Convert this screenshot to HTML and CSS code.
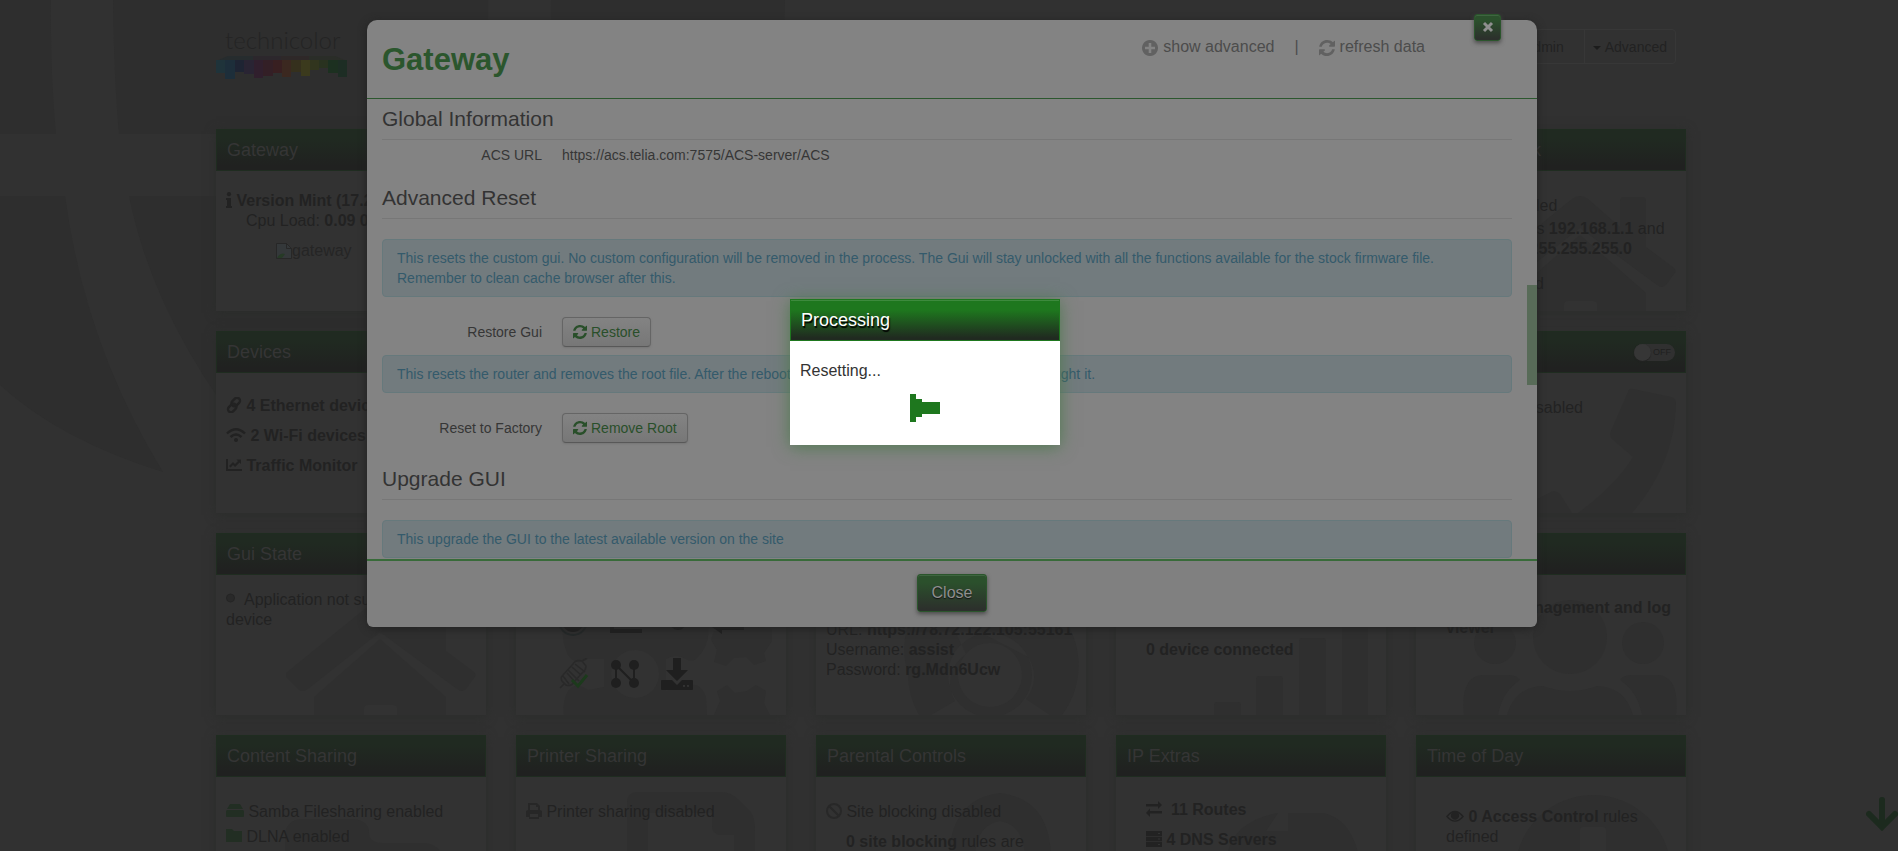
FILE: index.html
```html
<!DOCTYPE html>
<html lang="en">
<head>
<meta charset="utf-8">
<title>Gateway</title>
<link rel="stylesheet" href="styles.css">
</head>
<body>
<svg class="defs" width="0" height="0" aria-hidden="true">
  <symbol id="refresh" viewBox="0 0 1536 1536"><path d="M1511 928c0 2 0 5-1 7-89 371-385 601-762 601-202 0-398-80-545-220L74 1445c-12 12-28 19-45 19-16 0-29-29-29-64V952c0-35 29-64 64-64h448c35 0 64 29 64 64 0 17-7 33-19 45l-137 137c94 88 219 138 348 138 178 0 343-92 436-244 24-39 36-77 53-117 5-14 15-23 30-23h192c18 0 32 15 32 40zm25-800v448c0 35-29 64-64 64h-448c-35 0-64-29-64-64 0-17 7-33 19-45l138-138c-95-88-220-137-349-137-178 0-343 92-436 244-24 39-36 77-53 117-5 14-15 23-30 23H50c-18 0-32-14-32-32v-7C108 230 407 0 784 0c202 0 400 81 547 220l130-129c12-12 28-19 45-19 16 0 30 29 30 56z"/></symbol>
  <symbol id="house" viewBox="0 0 270 140"><path d="M70 98 L156 28 Q164 22 172 28 L204 56 V30 Q204 26 208 26 H226 Q230 26 230 30 V76 L258 97 Q261 100 258 103 L250 114 Q246 118 241 114 L164 57 L92 114 Q86 118 82 114 L70 102Z"/><path d="M98 122 L164 64 L230 122 V140 H181 V133 Q181 130 177 130 H152 Q148 130 148 134 V140 H98Z"/></symbol>
</svg>

<svg class="globe" viewBox="0 0 800 520" aria-hidden="true">
  <path class="dark" d="M0 0H51Q50 70 56 134H0ZM113 0H488Q489 70 483 134H119Q114 80 113 0ZM551 0H785Q784 70 775 134H546Q551 80 551 0ZM0 196H65Q85 345 163 472Q60 440 0 385ZM129 196H475Q445 370 301 500Q160 350 129 196ZM539 196H760Q700 370 460 470Q520 350 539 196Z"/>
</svg>

<div class="page">
  <header class="top">
    <svg class="logo" width="132" height="52" viewBox="0 0 132 52" role="img" aria-label="technicolor">
      <text class="logo-text" x="9" y="20">technicolor</text>
      <path fill="#262c2e" d="M0 32l12-5h25v5z"/><path fill="#2c272c" d="M37 32v-5h28v5z"/><path fill="#2e2828" d="M65 32v-5h28v5z"/><path fill="#2a2d28" d="M93 32v-5h26l12 5z"/>
      <path fill="#1f333a" d="M0 31h9v13H0z"/><path fill="#1d2e3a" d="M9 31h10v19H9z"/><path fill="#1e2433" d="M19 31h9v12h-9z"/><path fill="#292433" d="M28 31h10v14H28z"/><path fill="#301f2d" d="M38 31h9v18h-9z"/><path fill="#331f26" d="M47 31h10v16H47z"/><path fill="#381f21" d="M57 31h9v13h-9z"/><path fill="#3b2820" d="M66 31h9v17h-9z"/><path fill="#35301d" d="M75 31h10v12H75z"/><path fill="#3b3a1d" d="M85 31h9v16h-9z"/><path fill="#31351e" d="M94 31h9v10h-9z"/><path fill="#29321f" d="M103 31h9v8h-9z"/><path fill="#1c3020" d="M112 31h10v13h-10z"/><path fill="#1d2d24" d="M122 31h9v17h-9z"/>
    </svg>
    <nav class="nav">
      <button type="button">admin</button>
      <button type="button"><span class="caret"></span>Advanced</button>
    </nav>
  </header>

  <main class="grid">
    <section class="card">
      <h2>Gateway</h2>
      <div class="body">
        <p><svg class="i6" viewBox="0 0 6 16"><circle cx="3" cy="2.2" r="2.1"/><path d="M0 6h5v8h1v2H0v-2h1V8H0z"/></svg> <b>Version Mint (17.2)</b></p>
        <p class="indent">Cpu Load: <b>0.09 0.12</b></p>
        <p class="thumb"><svg class="broken" viewBox="0 0 16 16"><path d="M.5.5h10l5 5v10H.5z" fill="#34383a" stroke="#272727"/><path d="M10.500.5v5h5" fill="none" stroke="#272727"/><path d="M1 15q3-6 8-4l-3 4z" fill="#263a26"/></svg><span>gateway</span></p>
      </div>
    </section>
    <section class="card"><h2>Broadband</h2><div class="body"></div></section>
    <section class="card"><h2>Internet Access</h2><div class="body"></div></section>
    <section class="card"><h2>Wireless</h2><div class="body"></div></section>
    <section class="card">
      <h2>Local Network</h2>
      <div class="body">
        <svg class="mark"><use href="#house"/></svg>
        <p class="low">&emsp;&nbsp;&nbsp;DHCP enabled</p>
        <p class="indent tight">Gateway IP is <b>192.168.1.1</b> and</p>
        <p class="indent">Netmask is <b>255.255.255.0</b></p>
        <p class="indent gap">&nbsp;IPv6 enabled</p>
      </div>
    </section>

    <section class="card">
      <h2>Devices</h2>
      <div class="body list">
        <p><svg class="i16" viewBox="0 0 16 16"><g fill="none" stroke="#222" stroke-width="2.400"><rect x="6.800" y="0.300" width="6" height="9.500" rx="3" transform="rotate(45 9.800 5)"/><rect x="3.200" y="6.200" width="6" height="9.500" rx="3" transform="rotate(45 6.200 11)"/></g></svg> <b>4 Ethernet devices</b></p>
        <p><svg class="i20" viewBox="0 0 20 16"><g fill="none" stroke="#222" stroke-width="2.400"><path d="M1 6.500q9-8.500 18 0M4.500 10q5.500-5 11 0"/></g><circle cx="10" cy="13" r="2"/></svg> <b>2 Wi-Fi devices</b></p>
        <p><svg class="i16" viewBox="0 0 16 16"><path d="M0 2h2v10h14v2H0zM3 9l4-4 2 2 3-3-1.500-1.500H15V7l-1.500-1.500L9 10 7 8l-2.500 2.500z"/></svg> <b>Traffic Monitor</b></p>
      </div>
    </section>
    <section class="card"><h2>WAN Services</h2><div class="body"></div></section>
    <section class="card"><h2>Firewall</h2><div class="body"></div></section>
    <section class="card"><h2>Diagnostics</h2><div class="body"></div></section>
    <section class="card">
      <h2>Telephony <label class="switch"><input type="checkbox" aria-label="Telephony"><span>OFF</span></label></h2>
      <div class="body">
        <svg class="mark" viewBox="0 0 270 140"><path d="M212 19Q213 15 217 16L255 24Q260 25 260 30Q259 90 216 140H162Q200 112 217 84L196 66Q193 63 195 58ZM121 126L135 119Q140 117 144 121L156 140H110Z"/></svg>
        <p class="low indent">Telephony disabled</p>
      </div>
    </section>

    <section class="card">
      <h2>Gui State</h2>
      <div class="body high">
        <svg class="mark"><use href="#house"/></svg>
        <p><svg class="i9" viewBox="0 0 9 16"><circle cx="4.500" cy="7" r="4" fill="#292929" stroke="#252525"/></svg>&nbsp; Application not supported on device</p>
      </div>
    </section>
    <section class="card">
      <h2>Management</h2>
      <div class="body">
        <svg class="mark" viewBox="0 0 270 140"><path fill-rule="evenodd" d="M48 40H190Q198 68 180 84Q176 87 170 84Q160 78 150 84V116Q160 112 172 111Q184 106 190 122L191 140H48Q46 128 52 116Q60 106 72 115L88 112V84L72 84Q60 92 52 80Q44 64 48 40ZM119 75a24 24 0 1 0 .1 0Z"/><path d="M198 56l10-2 4-14h24l6 12 14 2v12l-8 12 2 8-12 4-8-8-12 1-8 8-12-4 3-12-6-10zM198 140l6-14-3-10 10-6 8 8 12-2 9-6 10 6-2 12 6 12z"/></svg>
        <div class="tools">
          <svg viewBox="0 0 32 32"><circle cx="14" cy="13" r="14" fill="none" stroke="#242828" stroke-width="2"/><circle cx="14" cy="13" r="11"/></svg>
          <svg viewBox="0 0 32 32"><path d="M0 0h4v21h28v4H0z"/></svg>
          <svg viewBox="0 0 32 32"><circle cx="17" cy="14" r="8"/></svg>
          <svg viewBox="0 0 32 32"><path d="M10 17h22v5H10v4L0 19l10-9z"/></svg>
          <svg viewBox="0 0 32 32"><g fill="none" stroke="#292929" stroke-width="1.500"><path d="M4 17L14 6q3-5 9-3l4 5q0 4-3 6L15 24q-3 5-8 3l-4-4q-2-3 1-6zM9 12l11 11M16 6l10 8M4 18l6 8M8 15l8 9M13 9l9 8M23 3l5-3M1 30l4-4"/></g><path d="M13 22l6 6L28 17" fill="none" stroke="#1c3a1c" stroke-width="3"/></svg>
          <svg viewBox="0 0 32 32"><path d="M6 7v18M6 7l18 18V7" fill="none" stroke="#1f1f1f" stroke-width="2"/><circle cx="6" cy="7" r="5"/><circle cx="24" cy="7" r="5"/><circle cx="6" cy="25" r="5"/><circle cx="24" cy="25" r="5"/></svg>
          <svg viewBox="0 0 32 32"><path fill-rule="evenodd" d="M12 0h8v12h7L16 23 5 12h7zM0 23q0-1 1-1h10l5 5 5-5h10q1 0 1 1v8q0 1-1 1H1q-1 0-1-1zM22 27v2h2v-2zM26 27v2h2v-2z"/></svg>
        </div>
      </div>
    </section>
    <section class="card">
      <h2>Assistance</h2>
      <div class="body remote">
        <svg class="mark" viewBox="0 0 270 140"><g fill-rule="evenodd"><path d="M92 99a82 82 0 0 1 10-70h24l24 50a35 35 0 0 0-11 47l-24 14h-12A82 82 0 0 1 92 99zM150 50h48l38-20a82 82 0 0 1 10 110h-12l-24-16a35 35 0 0 0 2-42zM174 58a42 42 0 0 0-42 42 42 42 0 0 0 42 42 42 42 0 0 0 42-42 42 42 0 0 0-42-42zm0 10a32 32 0 1 1-.1 0z"/></g></svg>
        <p>URL: <b>https://78.72.122.105:55161</b></p>
        <p>Username: <b>assist</b></p>
        <p>Password: <b>rg.Mdn6Ucw</b></p>
      </div>
    </section>
    <section class="card">
      <h2>Mobile</h2>
      <div class="body mobile">
        <svg class="mark" viewBox="0 0 270 140"><path d="M98 140v-10q0-3 3-3h21q3 0 3 3v10zM140 140v-36q0-3 3-3h21q3 0 3 3v36zM183 140V66q0-3 3-3h21q3 0 3 3v74zM226 140V28q0-3 3-3h20q3 0 3 3v112z"/></svg>
        <p class="indent"><b>0 device connected</b></p>
      </div>
    </section>
    <section class="card">
      <h2>System</h2>
      <div class="body extras">
        <svg class="mark" viewBox="0 0 270 140"><circle cx="154" cy="62" r="37"/><circle cx="79" cy="68" r="21"/><circle cx="227" cy="68" r="21"/><path d="M91 140q8-28 36-29 27 10 54 0 28 1 36 29zM48 140q-4-38 18-40h25q10 0 13 5-18 12-22 35zM260 140q4-38-18-40h-25q-10 0-13 5 18 12 22 35z"/></svg>
        <p class="indent"><b>&emsp;&nbsp;&nbsp;User management and log viewer</b></p>
      </div>
    </section>

    <section class="card">
      <h2>Content Sharing</h2>
      <div class="body share">
        <svg class="mark" viewBox="0 0 270 140"><path d="M69 60q0-17 17-18h52q15 2 15 14 0 10 14 10h42q17 2 18 18v56H69z"/></svg>
        <p><svg class="i18" viewBox="0 0 18 16"><path fill="#222e23" d="M4 1h10l3 5H1zM0 8q0-1 2-1h14q2 0 2 1v5q0 1-1 1H1q-1 0-1-1z"/></svg> Samba Filesharing enabled</p>
        <p><svg class="i16" viewBox="0 0 16 16"><path fill="#222e23" d="M0 1h6l2 2h8v11H0z"/></svg> DLNA enabled</p>
      </div>
    </section>
    <section class="card">
      <h2>Printer Sharing</h2>
      <div class="body share">
        <svg class="mark" viewBox="0 0 270 140"><path fill-rule="evenodd" d="M111 25q0-9 9-10h84q12 0 20 9l10 10q5 6 5 20v86H111zM132 36v60h86V58h-14q-8-1-8-9V36z"/></svg>
        <p><svg class="i16" viewBox="0 0 16 16"><path fill="#272727" fill-rule="evenodd" d="M3 0h8l3 3v4l2 1v6h-3v2H3v-2H0V8l2-1V0zM4 2v5h8V4h-2V2zM4 11v3h8v-3z"/></svg> Printer sharing disabled</p>
      </div>
    </section>
    <section class="card">
      <h2>Parental Controls</h2>
      <div class="body share">
        <svg class="mark" viewBox="0 0 270 140"><path fill-rule="evenodd" d="M184 16q50 6 51 64v60H133V80q2-58 51-64zm0 28q-24 4-25 36v20h50V80q-1-32-25-36z"/></svg>
        <p><svg class="i16" viewBox="0 0 16 16"><g fill="none" stroke="#282828" stroke-width="2"><circle cx="8" cy="8" r="7"/><path d="M3 3l10 10"/></g></svg> Site blocking disabled</p>
        <p class="indent gap4"><b>0 site blocking</b> rules are</p>
      </div>
    </section>
    <section class="card">
      <h2>IP Extras</h2>
      <div class="body extras">
        <svg class="mark" viewBox="0 0 270 140"><path d="M112 74q8-30 50-38l-12 18h22V36h36q30 8 36 50v54H108z"/></svg>
        <p class="indent"><svg class="i16" viewBox="0 0 16 16"><path d="M0 3h12V0l4 4-4 4V5.500H0zM16 10H4V7.500L0 12l4 4v-3.500h12z"/></svg>&nbsp; <b>11 Routes</b></p>
        <p class="indent"><svg class="i16" viewBox="0 0 16 16"><path fill-rule="evenodd" d="M0 0h16v5H0zM0 5.800h16v4.500H0zM0 11h16v5H0zM12 2v1h2V2zM12 7.500v1h2v-1zM12 13v1h2v-1z"/></svg> <b>4 DNS Servers</b></p>
      </div>
    </section>
    <section class="card">
      <h2>Time of Day</h2>
      <div class="body tod">
        <svg class="mark" viewBox="0 0 270 140"><path fill-rule="evenodd" d="M177 18a78 78 0 1 0 .1 0zm-10 32h20q3 0 3 3v47h-26V53q0-3 3-3z"/></svg>
        <p class="indent"><svg class="i18" viewBox="0 0 18 16"><path fill-rule="evenodd" d="M0 8.500Q9-3 18 8.500 9 19 0 8.500zM2 8.500q7 8 14 0-1.500-2-4-3.500a4 4 0 1 1-6 0Q3.500 6.500 2 8.500z"/></svg> <b>0 Access Control</b> rules defined</p>
      </div>
    </section>
  </main>
</div>

<a class="down" href="#bottom" aria-label="Scroll down"><svg width="32" height="34" viewBox="0 0 32 34"><path d="M16 3v26M3 17l13 13 13-13" fill="none" stroke="#1c2a1e" stroke-width="6" stroke-linecap="round"/></svg></a>

<div class="modal" role="dialog" aria-labelledby="modal-title">
  <button class="x" type="button" aria-label="Close dialog"><svg width="12" height="12" viewBox="0 0 12 12"><path d="M2 2l8 8M10 2l-8 8" stroke="#8f8f8f" stroke-width="3"/></svg></button>
  <div class="modal-head">
    <h1 id="modal-title">Gateway</h1>
    <div class="actions">
      <a href="#advanced"><svg class="i16" viewBox="0 0 16 16"><path fill-rule="evenodd" d="M8 0a8 8 0 1 0 .01 0zM6.700 3h2.600v3.700H13v2.600H9.300V13H6.700V9.300H3V6.700h3.700z"/></svg><span>show advanced</span></a>
      <span class="bar">|</span>
      <a href="#refresh-data"><svg class="i16"><use href="#refresh"/></svg><span>refresh data</span></a>
    </div>
  </div>
  <form class="modal-body">
    <fieldset>
      <legend>Global Information</legend>
      <div class="row first"><span class="label">ACS URL</span><span>https://acs.telia.com:7575/ACS-server/ACS</span></div>
    </fieldset>
    <fieldset>
      <legend>Advanced Reset</legend>
      <div class="alert top-gap">This resets the custom gui. No custom configuration will be removed in the process. The Gui will stay unlocked with all the functions available for the stock firmware file.<br>Remember to clean cache browser after this.</div>
      <div class="row"><label class="label" for="restore">Restore Gui</label><button class="btn" id="restore" type="button"><svg class="i14"><use href="#refresh"/></svg>Restore</button></div>
      <div class="alert short-gap">This resets the router and removes the root file. After the reboot the router will be exactly like when you bought it.</div>
      <div class="row"><label class="label" for="reset">Reset to Factory</label><button class="btn" id="reset" type="button"><svg class="i14"><use href="#refresh"/></svg>Remove Root</button></div>
    </fieldset>
    <fieldset class="last">
      <legend>Upgrade GUI</legend>
      <div class="alert top-gap">This upgrade the GUI to the latest available version on the site</div>
    </fieldset>
    <div class="scroll"></div>
  </form>
  <div class="modal-foot"><button class="close" type="button">Close</button></div>
</div>

<div class="popup" role="alertdialog" aria-labelledby="popup-title">
  <h2 id="popup-title">Processing</h2>
  <p>Resetting...</p>
  <svg width="30" height="28" viewBox="0 0 30 28"><path d="M0 0h6v5h6v3h18v12H12v3H6v5H0z"/></svg>
</div>
</body>
</html>
```
FILE: styles.css
```css
* { box-sizing: border-box; }
body {
  margin: 0;
  height: 100vh;
  overflow: hidden;
  background: #313131;
  color: #222;
  font: 16px/20px "Liberation Sans", Arial, sans-serif;
}
p, h1, h2 { margin: 0; font-weight: normal; }
a { color: inherit; text-decoration: none; }
button { font-family: inherit; cursor: pointer; }
svg { fill: #222; }
.defs { position: absolute; }

.globe { position: absolute; left: 0; top: 0; width: 800px; height: 520px; }
.globe .dark { fill: #2e2e2e; }

.page { position: relative; width: 1470px; margin: 0 auto; left: 2px; }
.top { display: flex; justify-content: space-between; align-items: flex-start; height: 129px; padding: 29px 10px 0 0; }
.logo { overflow: visible; }
.logo-text { font: 300 24px Lato, sans-serif; fill: #242424; }
.nav { display: flex; border: 1px solid #373737; border-radius: 4px; }
.nav button { height: 33px; padding: 0 8px; border: 0; background: none; color: #222; font-size: 14px; }
.nav button:first-child { padding-right: 20px; }
.nav button + button { border-left: 1px solid #373737; }
.caret { display: inline-block; margin-right: 4px; border: 4px solid transparent; border-top-color: #1c1c1c; border-bottom: 0; vertical-align: middle; }

.grid { display: grid; grid-template-columns: repeat(5, 1fr); gap: 20px 30px; }
.card { background: #323232; box-shadow: 0 2px 10px #2b2d2b; }
.card h2 {
  display: flex; align-items: center; justify-content: space-between;
  height: 42px; padding: 0 10px;
  border: 1px solid #1f2c20;
  background: linear-gradient(#202a21 20%, #202120 90%);
  color: #353535; font-size: 18px;
}
.body { position: relative; height: 140px; padding: 20px 10px 0; overflow: hidden; }
.body p { position: relative; }
.mark { position: absolute; left: 0; top: 0; width: 270px; height: 140px; fill: #2f2f2f; }
.body p svg { height: 16px; vertical-align: -2px; }
.i6 { width: 6px; }
.i9 { width: 9px; margin-right: 1px; }
.i14 { width: 14px; height: 14px; }
.i16 { width: 16px; height: 16px; }
.i18 { width: 18px; }
.i20 { width: 20px; }
.broken { width: 16px; }
.indent { padding-left: 20px; }
.thumb { display: flex; align-items: center; margin-top: 10px; padding-left: 50px; color: #252525; }
.low { padding-top: 5px; }
.body .tight { margin-top: 3px; }
.gap { margin-top: 15px; }
.gap4 { margin-top: 10px; }
.list { padding-top: 23px; }
.list p + p { margin-top: 10px; }
.high { padding-top: 15px; }
.remote { padding-top: 45px; }
.mobile { padding-top: 65px; }
.share { padding-top: 25px; }
.share p + p { margin-top: 5px; }
.share p + .gap4 { margin-top: 10px; }
.extras { padding-top: 23px; }
.extras p + p { margin-top: 10px; }
.tod { padding-top: 30px; }
.tools { position: relative; display: grid; grid-template-columns: repeat(4, 32px); gap: 18px 19px; padding: 13px 0 0 33px; }
.tools svg { width: 32px; height: 32px; fill: #1f1f1f; }
.switch { position: relative; width: 41px; height: 17px; border-radius: 9px; background: #303030; font-size: 9px; line-height: 17px; color: #1f1f1f; text-align: right; padding-right: 4px; }
.switch input { position: absolute; left: 0; top: 0; margin: 0; width: 17px; height: 17px; appearance: none; border-radius: 9px; background: #363636; box-shadow: 0 1px 1px #222; }

.down { position: fixed; right: 0; bottom: 20px; height: 34px; }

.modal {
  position: absolute; top: 20px; left: calc(50% - 582px); width: 1170px;
  border-radius: 10px; background: #838383; color: #363636;
  box-shadow: 0 2px 8px #222;
  font-size: 14px;
}
.modal-head { display: flex; justify-content: space-between; height: 79px; padding: 20px 112px 0 15px; border-bottom: 1px solid #2c572e; }
.modal-head h1 { color: #2b562d; font-size: 31px; line-height: 40px; font-weight: bold; }
.actions { display: flex; gap: 20px; height: 16px; font-size: 16px; line-height: 14px; color: #4c4c4c; }
.actions a { display: flex; gap: 5px; }
.actions svg { fill: #616161; }
.x { position: absolute; right: 36px; top: -6px; display: flex; align-items: center; justify-content: center; width: 27px; height: 27px; padding: 0 0 2px; }
.x, .close { border: 1px solid #2b552c; border-radius: 3px; background: linear-gradient(#2b502c 20%, #2c302c 95%); box-shadow: inset 0 1px 0 #3e6540, 0 2px 4px #4a4a4a; }
.modal-body { position: relative; height: 460px; padding: 0 25px 0 15px; overflow: hidden; }
fieldset { margin: 0; padding: 0; border: 0; min-width: 0; }
legend { width: 100%; height: 41px; padding: 0; border-bottom: 1px solid #777; font-size: 21px; line-height: 40px; color: #333; }
.row { display: flex; align-items: center; gap: 20px; height: 30px; }
.label { width: 160px; text-align: right; }
.row.first { height: 38px; padding-bottom: 8px; }
.alert { margin-bottom: 20px; padding: 8px 14px; border: 1px solid #66797c; border-radius: 4px; background: #727b7e; color: #345a6b; }
.top-gap { margin-top: 20px; }
.short-gap { margin-top: 8px; }
.last { margin-top: 16px; }
.btn { display: flex; align-items: center; gap: 4px; height: 30px; padding: 0 10px; border: 1px solid #656565; border-bottom-color: #585858; border-radius: 4px; background: linear-gradient(#838383, #777); color: #294f2a; font-size: 14px; box-shadow: 0 1px 2px #767676; }
.btn svg { fill: #294f2a; }
.scroll { position: absolute; right: 0; top: 186px; width: 10px; height: 100px; background: #586b58; }
.modal-foot { display: flex; justify-content: center; align-items: center; height: 68px; padding-bottom: 2px; border-top: 2px solid #386b39; border-radius: 0 0 6px 6px; background: #808080; }
.close { width: 70px; height: 38px; padding: 0; color: #8f8f8f; font-size: 16px; text-shadow: 0 1px 1px #111; }

.popup { position: absolute; left: calc(50% - 159px); top: 299px; width: 270px; height: 146px; background: #fff; color: #333; box-shadow: 0 2px 16px #4f7a50; }
.popup h2 { height: 42px; padding-left: 10px; border: 1px solid #1e771e; background: linear-gradient(#1e771e 25%, #202a20 95%); box-shadow: inset 0 1px 0 #3d8a3d; color: #fff; font-size: 18px; line-height: 40px; text-shadow: 1px 2px 1px #000; }
.popup p { padding: 20px 10px 0; }
.popup svg { display: block; margin: 13px auto 0; fill: #1e771e; }
```
